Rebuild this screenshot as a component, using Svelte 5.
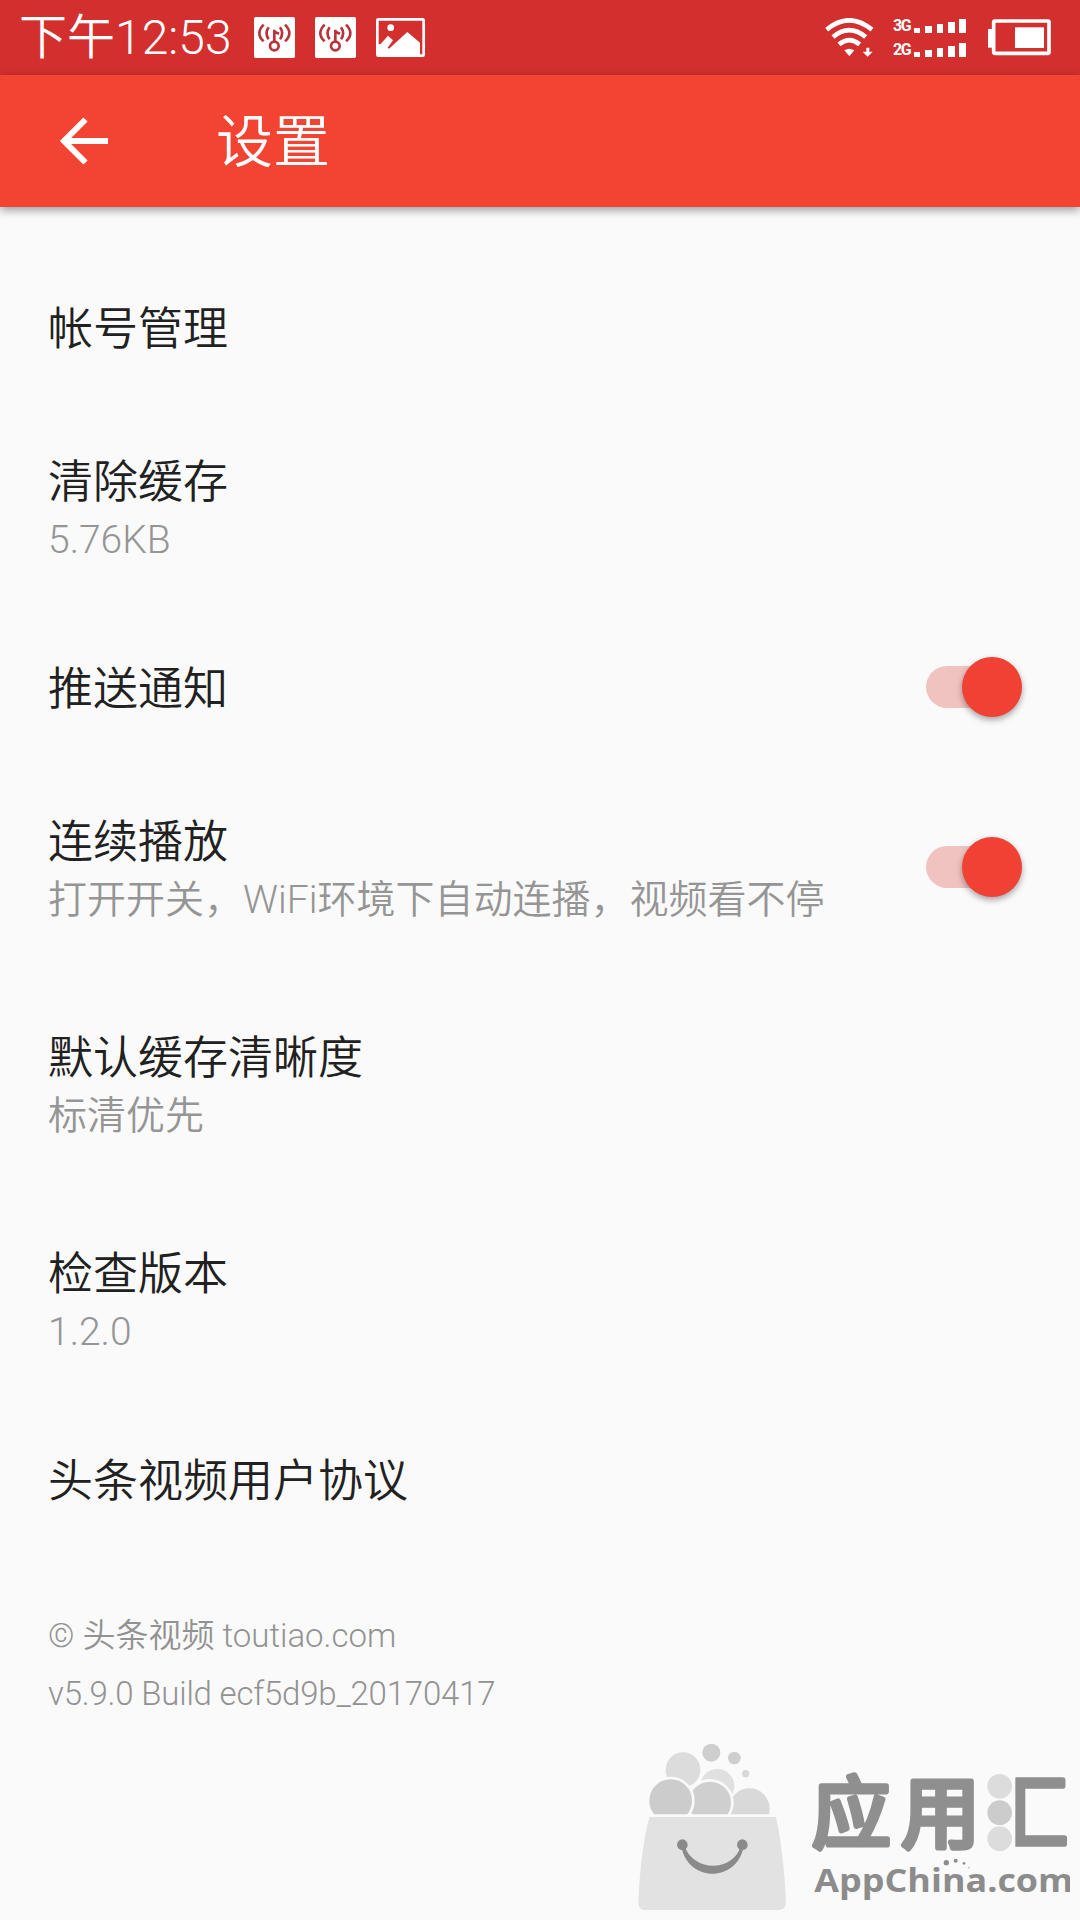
<script lang="ts">
	type Item = { title: string; note?: string; toggle?: boolean };

	let items: Item[] = $state([
		{ title: '帐号管理' },
		{ title: '清除缓存', note: '5.76KB' },
		{ title: '推送通知', toggle: true },
		{ title: '连续播放', note: '打开开关，WiFi环境下自动连播，视频看不停', toggle: true },
		{ title: '默认缓存清晰度', note: '标清优先' },
		{ title: '检查版本', note: '1.2.0' },
		{ title: '头条视频用户协议' }
	]);

	const bars = [5, 7, 9, 11, 14];
</script>

{#snippet hotspot()}
	<svg class="hotspot" width="41" height="41" viewBox="0 0 123 123">
		<rect width="123" height="123" rx="5" fill="#fff" />
		<g fill="none" stroke="#b8343a" stroke-width="8">
			<circle cx="61" cy="87" r="13" />
			<path d="M61 73V38M61 44l14 6" />
			<path d="M44 31q-13 18 0 36M29 23q-26 26 0 50M78 31q13 18 0 36M93 23q26 26 0 50" />
		</g>
	</svg>
{/snippet}

<div class="screen">
	<div class="status">
		<span class="time">下午12:53</span>
		{@render hotspot()}
		{@render hotspot()}
		<svg class="photo" width="49" height="39" viewBox="0 0 147 117">
			<rect x="4" y="4" width="139" height="109" rx="3" fill="none" stroke="#fff" stroke-width="8" />
			<circle cx="44" cy="29" r="10" fill="#fff" />
			<path d="M14 78l22-25 15 14-16 22 4 3 55-50 38 32v38H5V78z" fill="#fff" />
		</svg>

		<svg class="wifi" width="50" height="40" viewBox="0 0 150 120">
			<g fill="none" stroke="#fff" stroke-width="14">
				<path d="M5 35q67-56 136 0" />
				<path d="M24 57q49-41 98 0" />
				<path d="M42 79q31-25 62 0" />
			</g>
			<path d="M58 97q15-9 30 0l-15 18z" fill="#fff" />
			<path d="M124 89h9v12h10l-15 15-15-15h11z" fill="#fff" />
		</svg>
		<div class="signals">
			{#each ['3G', '2G'] as net}
				<div class="signal">
					<span>{net}</span>
					{#each bars as h}
						<i style="height: {h}px"></i>
					{/each}
				</div>
			{/each}
		</div>
		<svg class="battery" width="63" height="37" viewBox="0 0 189 111">
			<path d="M0 30h14v56H0z" fill="#fff" />
			<rect x="17" y="6" width="166" height="97" rx="4" fill="none" stroke="#fff" stroke-width="11" />
			<rect x="81" y="25" width="87" height="62" fill="#fff" />
		</svg>
	</div>

	<header>
		<svg width="48" height="48" viewBox="0 0 48 48" fill="none" stroke="#fff" stroke-width="6">
			<path d="M25.500 2.500L4 24l21.500 21.500M4 24h44" />
		</svg>
		<h1>设置</h1>
	</header>

	<ul>
		{#each items as item}
			<li class:double={item.note}>
				<div class="label">
					<p class="title">{item.title}</p>
					{#if item.note}
						<p class="note">{item.note}</p>
					{/if}
				</div>
				{#if item.toggle !== undefined}
					<button
						class="switch"
						class:on={item.toggle}
						aria-label={item.title}
						onclick={() => (item.toggle = !item.toggle)}
					></button>
				{/if}
			</li>
		{/each}
	</ul>

	<footer>
		<p>© 头条视频 toutiao.com</p>
		<p class="build">v5.9.0 Build ecf5d9b_20170417</p>
	</footer>

	<svg class="watermark" width="460" height="200" viewBox="0 0 1380 600">
		<defs>
			<clipPath id="frame"><rect x="1186" y="140" width="190" height="270" /></clipPath>
			<clipPath id="edge"><rect width="1350" height="600" /></clipPath>
		</defs>
		<g stroke="#fafafa" stroke-width="8">
			<circle cx="189" cy="149" r="56" fill="#dcdcdc" />
			<circle cx="292" cy="198" r="55" fill="#e0e0e0" />
			<circle cx="388" cy="266" r="65" fill="#d9d9d9" />
			<circle cx="270" cy="248" r="67" fill="#cfcfcf" />
			<circle cx="152" cy="242" r="68" fill="#cccccc" />
		</g>
		<circle cx="274" cy="98" r="27" fill="#cecece" />
		<circle cx="343" cy="114" r="19" fill="#cecece" />
		<circle cx="377" cy="161" r="11" fill="#d8d8d8" />
		<path d="M70 283h420v60H70z" fill="#fafafa" />
		<path d="M88 291H468Q490 390 498 545Q498 570 476 570H76Q54 570 55 545Q62 390 88 291z" fill="#e2e2e2" />
		<g fill="#8a8a8a">
			<circle cx="187" cy="374" r="16" />
			<circle cx="367" cy="374" r="16" />
			<path d="M184 380C205 488 350 488 371 380L362 378C340 457 220 457 194 378z" />
		</g>

		<g class="brand">
			<text x="576" y="366">应</text>
			<text x="844" y="366">用</text>
			<text x="1108" y="366" clip-path="url(#frame)">汇</text>
		</g>
		<circle cx="1139" cy="199" r="37" fill="#dcdcdc" />
		<circle cx="1139" cy="278" r="37" fill="#cccccc" />
		<circle cx="1139" cy="356" r="37" fill="#dcdcdc" />

		<text class="site" x="583" y="515" textLength="777" lengthAdjust="spacingAndGlyphs" clip-path="url(#edge)">AppChina.com</text>
		<g fill="#8c8c8c">
			<circle cx="979" cy="428" r="8" />
			<circle cx="1007" cy="422" r="6" />
			<circle cx="1032" cy="430" r="4" />
			<circle cx="1047" cy="443" r="2" />
		</g>
	</svg>
</div>

<style>
	:global(body) {
		margin: 0;
	}

	.screen {
		position: relative;
		width: 1080px;
		height: 1920px;
		overflow: hidden;
		background: #fafafa;
		font-family: Roboto, 'Noto Sans CJK SC DemiLight', 'Noto Sans CJK SC', sans-serif;
		font-weight: 300;
	}

	p,
	h1,
	ul {
		margin: 0;
		padding: 0;
	}

	.status {
		display: flex;
		align-items: center;
		box-sizing: border-box;
		height: 75px;
		padding: 0 29px 0 19px;
		background: #d32f2f;
		color: #fff;
	}

	.time {
		width: 235px;
		font-size: 48px;
		line-height: 75px;
		white-space: nowrap;
	}

	.hotspot {
		margin-right: 20px;
	}

	.wifi {
		margin-left: auto;
	}

	.signals {
		display: flex;
		flex-direction: column;
		gap: 9px;
		margin: 0 22px 0 18px;
	}

	.signal {
		display: flex;
		align-items: flex-end;
		gap: 4.800px;
		height: 15px;
	}

	.signal span {
		width: 16px;
		font-size: 16px;
		line-height: 14px;
		font-weight: 700;
		letter-spacing: -1.500px;
	}

	.signal i {
		width: 6.600px;
		background: #fff;
	}

	header {
		position: relative;
		display: flex;
		align-items: center;
		height: 132px;
		padding-left: 60px;
		background: #f24333;
		box-shadow: 0 3px 9px rgba(0, 0, 0, 0.4);
	}

	h1 {
		margin-left: 108px;
		padding-bottom: 9px;
		color: #fff;
		font-size: 57px;
		font-weight: 350;
	}

	ul {
		padding-top: 48px;
		list-style: none;
	}

	li {
		display: flex;
		align-items: center;
		justify-content: space-between;
		height: 144px;
		padding: 0 58px 0 48px;
	}

	li.double {
		height: 216px;
	}

	.label {
		padding-top: 6px;
	}

	.title {
		color: #212121;
		font-size: 45px;
		font-weight: 350;
		line-height: 60px;
	}

	.note {
		color: #959595;
		font-size: 39px;
		line-height: 54px;
	}

	.switch {
		position: relative;
		width: 96px;
		height: 60px;
		padding: 0;
		border: 0;
		background: none;
	}

	.switch::before {
		content: '';
		position: absolute;
		inset: 9px 0;
		border-radius: 21px;
		background: #ddd;
	}

	.switch::after {
		content: '';
		position: absolute;
		left: 0;
		top: 0;
		width: 60px;
		height: 60px;
		border-radius: 50%;
		background: #fff;
		box-shadow: 0 3px 6px rgba(0, 0, 0, 0.35);
	}

	.switch.on::before {
		background: #f0c3c0;
	}

	.switch.on::after {
		left: 36px;
		background: #f04134;
	}

	footer {
		padding: 56px 48px 0;
		color: #929292;
		font-size: 33px;
		line-height: 58px;
	}

	.build {
		letter-spacing: -0.200px;
	}

	.watermark {
		position: absolute;
		left: 620px;
		top: 1720px;
	}

	.brand {
		fill: #8f8f8f;
		stroke: #8f8f8f;
		stroke-width: 17;
		stroke-linejoin: round;
		font: 400 236px 'Noto Sans CJK SC', sans-serif;
	}

	.site {
		fill: #8c8c8c;
		font: 700 98px 'Open Sans', sans-serif;
	}
</style>
